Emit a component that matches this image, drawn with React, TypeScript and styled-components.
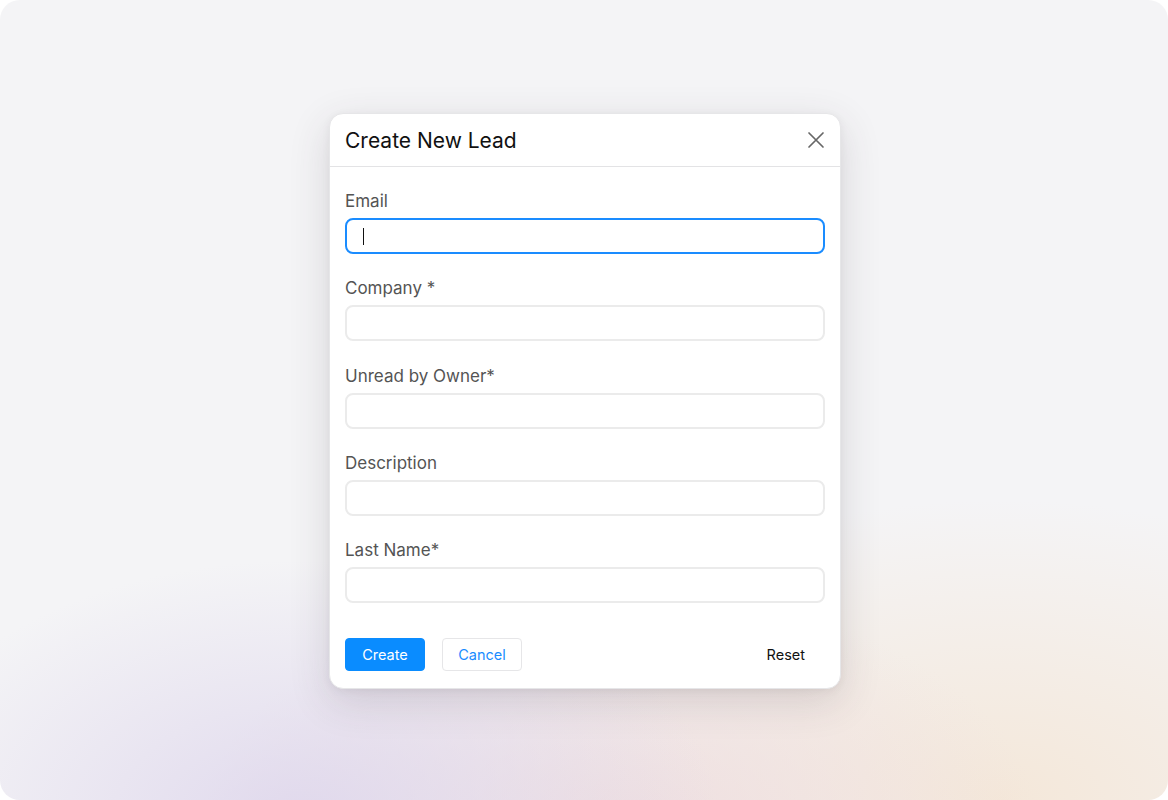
import React from "react";
import styled, { createGlobalStyle } from "styled-components";

const Global = createGlobalStyle`
  html, body { margin: 0; padding: 0; background: #ffffff; }
  body { font-family: Inter, "Noto Sans", sans-serif; -webkit-font-smoothing: antialiased; }
  * { box-sizing: border-box; }
`;

const Backdrop = styled.div`
  width: 1168px;
  height: 800px;
  border-radius: 20px;
  overflow: hidden;
  display: flex;
  align-items: center;
  justify-content: center;
  padding: 2px 0 0 2px;
  background:
    radial-gradient(ellipse 420px 260px at 300px 820px, rgba(222, 214, 236, 0.9), rgba(222, 214, 236, 0) 100%),
    radial-gradient(ellipse 420px 240px at 620px 830px, rgba(238, 220, 222, 0.9), rgba(238, 220, 222, 0) 100%),
    radial-gradient(ellipse 520px 300px at 1000px 800px, rgba(244, 230, 214, 0.9), rgba(244, 230, 214, 0) 100%),
    #f4f4f6;
`;

const Modal = styled.div`
  width: 512px;
  background: #ffffff;
  border-radius: 14px;
  border: 1px solid #e6e6e8;
  box-shadow: 0 12px 40px rgba(60, 50, 60, 0.16), 0 2px 8px rgba(0, 0, 0, 0.05);
  display: flex;
  flex-direction: column;
`;

const Header = styled.div`
  height: 53px;
  display: flex;
  align-items: center;
  justify-content: space-between;
  padding: 0 14px 0 15px;
  border-bottom: 1px solid #e3e3e5;
`;

const Title = styled.h2`
  margin: 0;
  font-size: 21px;
  font-weight: 400;
  color: #111;
`;

const CloseButton = styled.button`
  border: none;
  background: none;
  padding: 0;
  width: 20px;
  height: 20px;
  display: flex;
  align-items: center;
  justify-content: center;
  color: #676767;
  cursor: pointer;
`;

const Body = styled.div`
  padding: 24px 15px 0;
  display: flex;
  flex-direction: column;
  gap: 24.25px;
`;

const Field = styled.div`
  display: flex;
  flex-direction: column;
  gap: 7px;
`;

const Label = styled.label`
  font-size: 17px;
  line-height: 20px;
  color: #545454;
`;

const Input = styled.input`
  height: 36px;
  width: 100%;
  border: 2px solid #ebebeb;
  border-radius: 8px;
  padding: 0 16px;
  font: inherit;
  font-size: 15px;
  outline: none;
  background: #fff;
`;

const FocusedInput = styled.div`
  height: 36px;
  width: 100%;
  border: 2px solid #1a8cff;
  border-radius: 8px;
  padding: 0 16px;
  display: flex;
  align-items: center;
`;

const Caret = styled.span`
  display: block;
  width: 1px;
  height: 17px;
  background: #111;
`;

const Footer = styled.div`
  display: flex;
  align-items: center;
  padding: 35px 15px 17px;
  gap: 17px;
`;

const Button = styled.button<{ $variant: "primary" | "outline" | "text" }>`
  height: 33px;
  min-width: ${(p) => (p.$variant === "text" ? "0" : "80px")};
  border-radius: 4px;
  font-family: inherit;
  font-size: 14.5px;
  cursor: pointer;
  padding: 0 ${(p) => (p.$variant === "text" ? "19px" : "12px")};
  border: 1px solid
    ${(p) => (p.$variant === "primary" ? "#0a8cff" : p.$variant === "outline" ? "#e6e6e8" : "transparent")};
  background: ${(p) => (p.$variant === "primary" ? "#0a8cff" : "#fff")};
  color: ${(p) => (p.$variant === "primary" ? "#fff" : p.$variant === "outline" ? "#1a8cff" : "#111")};
  margin-left: ${(p) => (p.$variant === "text" ? "auto" : "0")};
`;

const fields = ["Company *", "Unread by Owner*", "Description", "Last Name*"];

export default function App() {
  return (
    <>
      <Global />
      <Backdrop>
        <Modal>
          <Header>
            <Title>Create New Lead</Title>
            <CloseButton aria-label="Close">
              <svg width="18" height="18" viewBox="0 0 18 18" fill="none" stroke="currentColor" strokeWidth="1.7" strokeLinecap="round">
                <path d="M2 2 L16 16 M16 2 L2 16" />
              </svg>
            </CloseButton>
          </Header>
          <Body>
            <Field>
              <Label>Email</Label>
              <FocusedInput>
                <Caret />
              </FocusedInput>
            </Field>
            {fields.map((f) => (
              <Field key={f}>
                <Label>{f}</Label>
                <Input />
              </Field>
            ))}
          </Body>
          <Footer>
            <Button $variant="primary">Create</Button>
            <Button $variant="outline">Cancel</Button>
            <Button $variant="text">Reset</Button>
          </Footer>
        </Modal>
      </Backdrop>
    </>
  );
}
